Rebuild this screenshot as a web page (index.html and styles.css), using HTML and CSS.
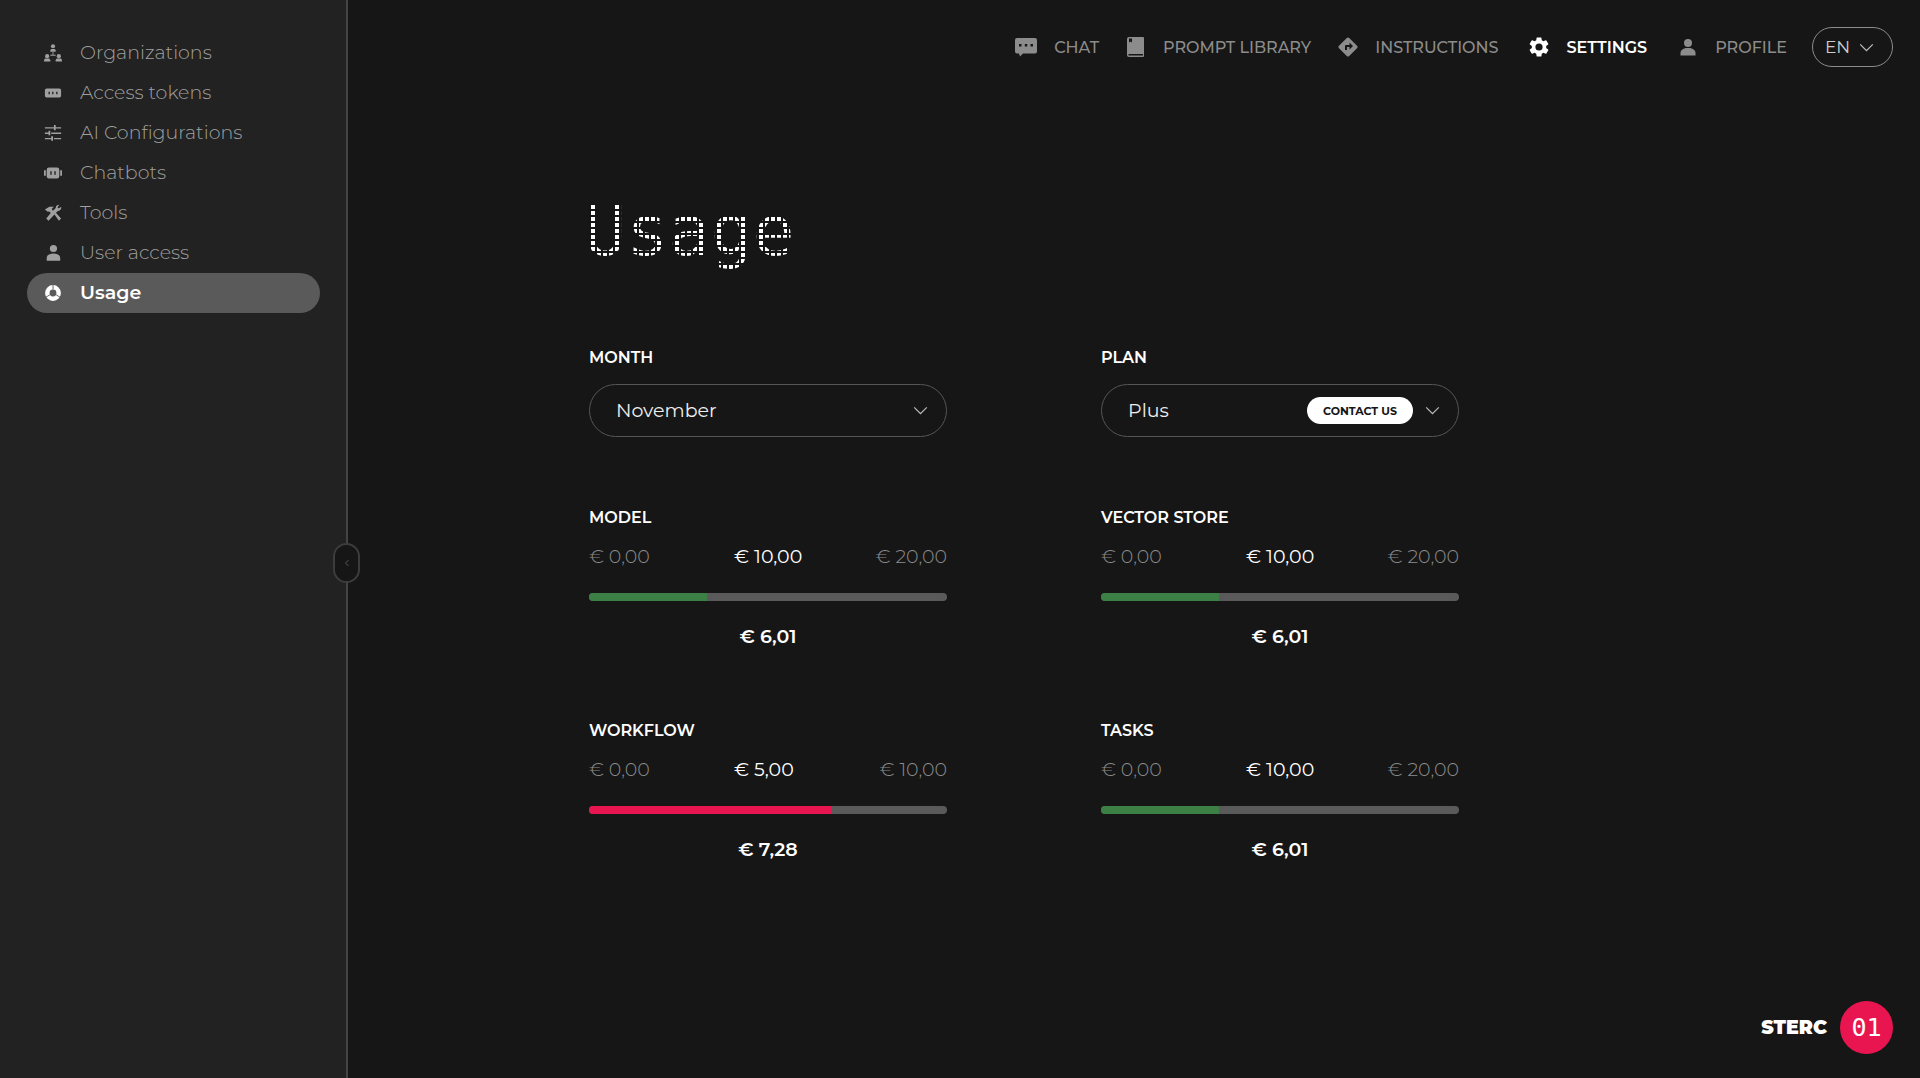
FILE: index.html
```html
<!DOCTYPE html>
<html lang="en">
<head>
<meta charset="utf-8">
<meta name="viewport" content="width=device-width, initial-scale=1">
<title>Usage</title>
<link rel="stylesheet" href="styles.css">
</head>
<body>
<div class="app">
  <aside class="sidebar">
    <nav class="side-nav" aria-label="Settings">
      <a class="side-link" href="#"><svg class="icon" viewBox="0 0 20 20"><circle cx="10" cy="2.500" r="2.300"/><path d="M7 8.500V7l1-1.500h4l1 1.500v1.500zM9.500 9h1v3h2.500v1H7v-1h2.500z"/><circle cx="3.500" cy="13.500" r="2.300"/><path d="M0 19.500V18l1-2h5l1 2v1.500z"/><circle cx="16.500" cy="13.500" r="2.300"/><path d="M13 19.500V18l1-2h5l1 2v1.500z"/></svg>Organizations</a>
      <a class="side-link" href="#"><svg class="icon" viewBox="0 0 20 20"><path fill-rule="evenodd" d="M3 5h14a2 2 0 0 1 2 2v6a2 2 0 0 1-2 2H3a2 2 0 0 1-2-2V7a2 2 0 0 1 2-2zM5 8.500v3h1.500v-3zM9 8.500v3h1.500v-3zM13.500 8.500v3H15v-3z"/></svg>Access tokens</a>
      <a class="side-link" href="#"><svg class="icon" viewBox="0 0 20 20"><path d="M1 3.500h10V1h2v2.500h6V5h-6v2h-2V5H1zM1 9.500h4v-2h2v5H5V11H1zM8 9.500h11V11H8zM1 15.500h7v-2h2v5H8V17H1zM11 15.500h8V17h-8z"/></svg>AI Configurations</a>
      <a class="side-link" href="#"><svg class="icon" viewBox="0 0 20 20"><path fill-rule="evenodd" d="M5.500 4h9A2.500 2.500 0 0 1 17 6.500v7a2.500 2.500 0 0 1-2.500 2.500h-9A2.500 2.500 0 0 1 3 13.500v-7A2.500 2.500 0 0 1 5.500 4zM7 8v4h1.500V8zM11.500 8v4H13V8z"/><path d="M0 7h2v6H0zM18 7h2v6h-2z"/></svg>Chatbots</a>
      <a class="side-link" href="#"><svg class="icon" viewBox="0 0 20 20"><path d="M6 3h5L8.500 5.500l1.500 2 3-3A4 4 0 0 1 17 .8l-2 2.700 1.500 1.500L19 3a4 4 0 0 1-4 5L5 18.500 2.500 16 7.500 10 5.500 8 4.500 9 1 6zM11.500 11.500l2-1.500 5.500 6-2.500 2.500z"/></svg>Tools</a>
      <a class="side-link" href="#"><svg class="icon" viewBox="0 0 20 20"><circle cx="10.500" cy="5" r="4"/><path d="M3 18.500v-3c0-3 3-5 7.500-5s7.500 2 7.500 5v3z"/></svg>User access</a>
      <a class="side-link active" href="#" aria-current="page"><svg class="icon" viewBox="0 0 20 20"><circle class="ring" cx="10" cy="10" r="6.300"/><path class="notch" d="M10 0v6M6.500 12 1.500 15M13.500 12l5 3"/></svg>Usage</a>
    </nav>
    <button class="collapse" type="button" aria-label="Collapse sidebar"><svg viewBox="0 0 6 8"><path d="M4.500 1 1.500 4l3 3"/></svg></button>
  </aside>

  <div class="page">
    <header class="topbar">
      <nav class="top-nav" aria-label="Main">
        <a class="top-link chat" href="#"><svg class="icon" viewBox="0 0 22 20"><path fill-rule="evenodd" d="M2 1h18a2 2 0 0 1 2 2v11.500a2 2 0 0 1-2 2H8l-3 3-1-3H2a2 2 0 0 1-2-2V3a2 2 0 0 1 2-2zM4 7v2.500h2.500V7zM9.800 7v2.500h2.500V7zM15.500 7v2.500H18V7z"/></svg>CHAT</a>
        <a class="top-link" href="#"><svg class="icon" viewBox="0 0 20 20"><path fill-rule="evenodd" d="M3 0h14a1 1 0 0 1 1 1v18a1 1 0 0 1-1 1H3a2 2 0 0 1-2-2V2a2 2 0 0 1 2-2zM3 1.500v4l1.500-1L6 5.500v-4zM2.500 17v1.500H17V17z"/></svg>PROMPT LIBRARY</a>
        <a class="top-link" href="#"><svg class="icon" viewBox="0 0 20 20"><path fill-rule="evenodd" d="M8.800 1a1.700 1.700 0 0 1 2.400 0L19 8.800a1.700 1.700 0 0 1 0 2.400L11.200 19a1.700 1.700 0 0 1-2.400 0L1 11.200a1.700 1.700 0 0 1 0-2.400zM7 13h2v-3h2.500v2.500L15 9l-3.500-3.500V8H8a1 1 0 0 0-1 1z"/></svg>INSTRUCTIONS</a>
        <a class="top-link wide active" href="#" aria-current="page"><svg class="icon" viewBox="0 0 24 24"><path d="M19.140 12.940c.04-.3.060-.61.060-.94s-.02-.64-.07-.94l2.030-1.580a.49.49 0 0 0 .12-.61l-1.920-3.320a.49.49 0 0 0-.59-.22l-2.390.96a7 7 0 0 0-1.620-.94l-.36-2.540a.48.48 0 0 0-.48-.41h-3.840a.48.48 0 0 0-.47.41l-.36 2.540a7.400 7.400 0 0 0-1.620.94l-2.390-.96a.48.48 0 0 0-.59.220L2.740 8.870a.48.48 0 0 0 .12.610l2.030 1.580a6 6 0 0 0 0 1.880l-2.030 1.580a.49.49 0 0 0-.12.610l1.920 3.320c.12.220.37.290.59.220l2.390-.96c.5.380 1.030.7 1.620.94l.36 2.540c.05.240.24.410.48.410h3.840c.24 0 .44-.17.470-.41l.36-2.540a7.400 7.400 0 0 0 1.620-.94l2.390.96c.22.080.47 0 .59-.22l1.920-3.320a.48.48 0 0 0-.12-.61zM12 15.600a3.600 3.600 0 1 1 0-7.200 3.600 3.600 0 0 1 0 7.200z"/></svg>SETTINGS</a>
        <a class="top-link wide" href="#"><svg class="icon" viewBox="-2 -2 24 24"><circle cx="10" cy="6" r="4"/><path d="M2.500 18.500V16c0-3 3-5 7.500-5s7.500 2 7.500 5v2.500z"/></svg>PROFILE</a>
      </nav>
      <button class="lang" type="button">EN<svg class="chevron" viewBox="0 0 16 10"><path d="m1 1.500 7 7 7-7"/></svg></button>
    </header>

    <main class="content">
      <h1 class="title">Usage</h1>
      <div class="grid">
        <div class="field">
          <label class="label" for="month">MONTH</label>
          <div class="select-box">
            <select class="select" id="month"><option>November</option></select>
            <svg class="chevron" viewBox="0 0 16 10"><path d="m1 1.500 7 7 7-7"/></svg>
          </div>
        </div>
        <div class="field">
          <label class="label" for="plan">PLAN</label>
          <div class="select-box">
            <select class="select" id="plan"><option>Plus</option></select>
            <button class="contact" type="button">CONTACT US</button>
            <svg class="chevron" viewBox="0 0 16 10"><path d="m1 1.500 7 7 7-7"/></svg>
          </div>
        </div>
        <section class="meter">
          <h2 class="label">MODEL</h2>
          <div class="scale"><span>€ 0,00</span><span class="mid">€ 10,00</span><span>€ 20,00</span></div>
          <div class="track"><div class="fill" style="width:33%"></div></div>
          <p class="total">€ 6,01</p>
        </section>
        <section class="meter">
          <h2 class="label">VECTOR STORE</h2>
          <div class="scale"><span>€ 0,00</span><span class="mid">€ 10,00</span><span>€ 20,00</span></div>
          <div class="track"><div class="fill" style="width:33%"></div></div>
          <p class="total">€ 6,01</p>
        </section>
        <section class="meter">
          <h2 class="label">WORKFLOW</h2>
          <div class="scale"><span>€ 0,00</span><span class="mid">€ 5,00</span><span>€ 10,00</span></div>
          <div class="track"><div class="fill over" style="width:68%"></div></div>
          <p class="total">€ 7,28</p>
        </section>
        <section class="meter">
          <h2 class="label">TASKS</h2>
          <div class="scale"><span>€ 0,00</span><span class="mid">€ 10,00</span><span>€ 20,00</span></div>
          <div class="track"><div class="fill" style="width:33%"></div></div>
          <p class="total">€ 6,01</p>
        </section>
      </div>
    </main>

    <footer class="brand"><span class="brand-name">STERC</span><span class="badge"><span class="badge-text">01</span></span></footer>
  </div>
</div>
</body>
</html>
```
FILE: styles.css
```css
* { box-sizing: border-box; }

body {
  margin: 0;
  background: #161616;
  color: #fff;
  font-family: Montserrat, Inter, sans-serif;
  font-size: 19px;
}

button, select { font: inherit; color: inherit; }
a { color: inherit; text-decoration: none; }
h1, h2, p { margin: 0; }

.app { display: flex; min-height: 100vh; }

.sidebar {
  position: relative;
  flex: 0 0 348px;
  padding: 33px 26px 33px 27px;
  background: #222;
  border-right: 2px solid #444;
}
.side-nav { display: flex; flex-direction: column; }
.side-link {
  display: flex;
  align-items: center;
  gap: 18px;
  height: 40px;
  padding: 0 17px 2px;
  border-radius: 20px;
  color: #a0a0a0;
  font-weight: 300;
}
.side-link .icon { width: 18px; height: 18px; margin-top: 2px; }
.side-link.active { background: #5a5a5a; color: #fff; font-weight: 600; }
.icon { flex: none; fill: currentColor; }
.ring { fill: none; stroke: currentColor; stroke-width: 5; }
.notch { fill: none; stroke: #5a5a5a; }

.collapse {
  position: absolute;
  top: 543px;
  right: -14px;
  display: flex;
  align-items: center;
  justify-content: center;
  width: 27px;
  height: 40px;
  padding: 0;
  border: 2px solid #3c3c3c;
  border-radius: 14px;
  background: #161616;
}
.collapse svg { width: 6px; height: 8px; fill: none; stroke: #555; }

.page { flex: 1; display: flex; flex-direction: column; min-width: 0; }

.topbar {
  display: flex;
  justify-content: flex-end;
  align-items: center;
  gap: 25px;
  padding: 27px 27px 0;
}
.top-nav { display: flex; gap: 27px; }
.top-link {
  display: flex;
  align-items: center;
  gap: 17px;
  color: #8c8c8c;
  font-size: 16px;
  font-weight: 500;
}
.top-link .icon { width: 20px; height: 20px; }
.top-link.chat .icon { width: 22px; }
.top-link.wide { gap: 15px; padding-left: 2px; }
.top-link.wide .icon { width: 24px; height: 24px; }
.top-link.active { color: #fff; font-weight: 600; }
.lang {
  display: flex;
  align-items: center;
  justify-content: space-between;
  width: 81px;
  height: 40px;
  padding: 0 18px 0 12px;
  border: 1px solid #8c8c8c;
  border-radius: 20px;
  background: transparent;
  color: #ccc;
  font-size: 17px;
}
.chevron { flex: none; width: 15px; height: 9px; fill: none; stroke: #bbb; stroke-width: 1.4; }

.content { padding: 124px 32px 48px 241px; }

/* Dot-matrix heading: a grid of square dots shows through the letters */
.title {
  width: max-content;
  margin-left: -5px;
  background:
    conic-gradient(from 90deg at 2px 2px, #fff 25%, #161616 0) 5px 0 / 6px 6px;
  -webkit-background-clip: text;
  background-clip: text;
  color: transparent;
  font-family: "DejaVu Sans Mono", monospace;
  font-size: 70px;
  font-weight: 400;
  line-height: 80px;
}
.grid {
  display: grid;
  grid-template-columns: 1fr 1fr;
  column-gap: 154px;
  max-width: 870px;
  margin-top: 77px;
}
.label {
  display: block;
  font-size: 16px;
  font-weight: 600;
  line-height: 20px;
}
.field { padding-bottom: 71px; }
.select-box {
  display: flex;
  align-items: center;
  position: relative;
  height: 53px;
  margin-top: 16px;
}
.select {
  width: 100%;
  height: 100%;
  padding: 0 26px;
  border: 1px solid #555;
  border-radius: 27px;
  background: transparent;
  color: #eee;
  font-weight: 400;
  appearance: none;
}
.select-box .chevron { position: absolute; right: 19px; pointer-events: none; }
.contact {
  position: absolute;
  right: 46px;
  width: 106px;
  height: 27px;
  padding: 0;
  border: 0;
  border-radius: 14px;
  background: #fff;
  color: #161616;
  font-size: 11px;
  font-weight: 700;
}

.meter { padding-bottom: 72px; }
.scale {
  display: grid;
  grid-template-columns: 145px 1fr auto;
  margin-top: 17px;
  color: #8c8c8c;
  font-weight: 300;
  line-height: 24px;
}
.scale .mid { color: #fff; font-weight: 400; }
.track {
  height: 8px;
  margin-top: 24px;
  overflow: hidden;
  border-radius: 4px;
  background: #5a5a5a;
}
.fill { height: 100%; background: #3d8046; }
.fill.over { background: #e91550; }
.total { margin-top: 24px; line-height: 24px; font-weight: 600; text-align: center; }

.brand {
  display: flex;
  align-items: center;
  justify-content: flex-end;
  gap: 13px;
  margin-top: auto;
  padding: 0 27px 24px;
}
.brand-name { font-weight: 900; }
.badge {
  display: flex;
  align-items: center;
  justify-content: center;
  width: 53px;
  height: 53px;
  border-radius: 50%;
  background: #e91550;
}
.badge-text { font-family: "DejaVu Sans Mono", monospace; font-size: 25px; line-height: 28px; }
```
